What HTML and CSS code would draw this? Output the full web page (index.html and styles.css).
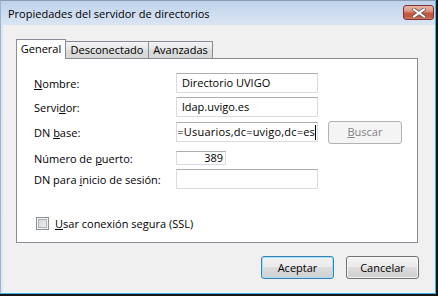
FILE: index.html
```html
<!DOCTYPE html>
<html>
<head>
<meta charset="utf-8">
<link rel="stylesheet" href="styles.css">
</head>
<body>
<div class="window">
  <div class="frame">
    <div class="titlebar">
      <span class="title">Propiedades del servidor de directorios</span>
      <div class="close">
        <svg width="14" height="10" viewBox="0 0 14 10">
          <path d="M2 1.5 L12 8.5 M12 1.5 L2 8.5" stroke="#5a5a5a" stroke-width="3.6" stroke-linecap="square"/>
          <path d="M2 1.5 L12 8.5 M12 1.5 L2 8.5" stroke="#ffffff" stroke-width="2" stroke-linecap="square"/>
        </svg>
      </div>
    </div>
    <div class="client">
      <div class="tabs">
        <div class="tab selected">General</div>
        <div class="tab t2">Desconectado</div>
        <div class="tab t3">Avanzadas</div>
      </div>
      <div class="panel">
        <div class="row r1">
          <span class="label"><u>N</u>ombre:</span>
          <div class="textbox">Directorio UVIGO</div>
        </div>
        <div class="row r2">
          <span class="label">Servi<u>d</u>or:</span>
          <div class="textbox">ldap.uvigo.es</div>
        </div>
        <div class="row r3">
          <span class="label">DN <u>b</u>ase:</span>
          <div class="textbox scrolled"><span class="dn">ou=Usuarios,dc=uvigo,dc=es</span><span class="caret"></span></div>
          <div class="btn disabled"><span><u>B</u>uscar</span></div>
        </div>
        <div class="row r4">
          <span class="label">Número de <u>p</u>uerto:</span>
          <div class="textbox port">389</div>
        </div>
        <div class="row r5">
          <span class="label">DN para <u>i</u>nicio de sesión:</span>
          <div class="textbox"></div>
        </div>
        <div class="check-row">
          <span class="checkbox"></span>
          <span class="check-label"><u>U</u>sar conexión segura (SSL)</span>
        </div>
      </div>
      <div class="buttons">
        <div class="btn default">Aceptar</div>
        <div class="btn">Cancelar</div>
      </div>
    </div>
  </div>
</div>
</body>
</html>
```
FILE: styles.css
```css
html, body {
  margin: 0;
  padding: 0;
  background: #1a1a1a;
}

body {
  font-family: "Open Sans", "Noto Sans", sans-serif;
  font-size: 11px;
  color: #000;
}

.window {
  width: 438px;
  height: 296px;
  background: #161616;
}

.frame {
  width: 436px;
  height: 294px;
  box-sizing: border-box;
  border-left: 1px solid #9fb3cc;
  border-top: 1px solid #8b9bb0;
  border-right: 1px solid #3db5ea;
  border-bottom: 1px solid #3db5ea;
  background: linear-gradient(#bfd2eb 0px, #cddcef 12px, #dae5f3 24px, #dfe9f5 100%);
  padding-left: 2px;
  display: flex;
  flex-direction: column;
}

.titlebar {
  height: 24px;
  display: flex;
  align-items: flex-start;
  padding-left: 5px;
  flex-shrink: 0;
}

.title {
  margin-top: 5px;
  line-height: 16px;
  font-size: 11px;
}

.close {
  margin-left: auto;
  margin-top: 4px;
  margin-right: 1px;
  width: 31px;
  height: 15px;
  box-sizing: border-box;
  border: 1px solid #7a3232;
  border-radius: 3px;
  background: linear-gradient(#ecb4a6 0%, #dd9482 40%, #c9573f 55%, #c4563f 80%, #d47a64 100%);
  display: flex;
  align-items: center;
  justify-content: center;
}

.close svg {
  display: block;
}

.client {
  flex: 1;
  background: #f0f0f0;
  padding: 14px 17px 0 13px;
  display: flex;
  flex-direction: column;
}

.tabs {
  display: flex;
  align-items: flex-end;
  height: 19px;
}

.tab {
  box-sizing: border-box;
  height: 17px;
  border: 1px solid #898c95;
  border-bottom: none;
  background: linear-gradient(#f4f4f4, #e4e4e4 50%, #dadada 51%, #d8d8d8);
  line-height: 15px;
  text-align: center;
  font-size: 11px;
}

.tab.selected {
  height: 20px;
  width: 50px;
  background: #ffffff;
  margin-bottom: -1px;
  position: relative;
  z-index: 1;
  line-height: 18px;
}

.tab.t2 {
  width: 83px;
  border-left: none;
}

.tab.t3 {
  width: 64px;
  border-left: none;
}

.panel {
  width: 402px;
  height: 185px;
  box-sizing: border-box;
  border: 1px solid #898c95;
  background: #ffffff;
  padding: 14px 0 0 17px;
}

.row {
  display: flex;
  align-items: center;
  height: 20px;
}

.r1 { margin-bottom: 4px; }
.r2 { margin-bottom: 5px; }
.r3 { margin-bottom: 9px; }
.r4 { height: 14px; margin-bottom: 4px; }

.label {
  width: 142px;
  flex-shrink: 0;
  white-space: nowrap;
}

.textbox {
  width: 142px;
  height: 20px;
  box-sizing: border-box;
  border: 1px solid #d9dbe1;
  border-top-color: #abadb3;
  background: #fff;
  padding: 0 5px;
  line-height: 18px;
  white-space: nowrap;
  overflow: hidden;
}

.textbox.scrolled {
  display: flex;
  justify-content: flex-end;
  align-items: center;
  padding: 0 1px 0 0;
}

.dn {
  flex-shrink: 0;
  letter-spacing: 0.2px;
}

.caret {
  flex-shrink: 0;
  width: 1px;
  height: 15px;
  background: #000;
}

.textbox.port {
  width: 50px;
  height: 14px;
  line-height: 12px;
  text-align: right;
  padding: 0 2px 0 0;
  overflow: visible;
}

.btn {
  box-sizing: border-box;
  width: 73px;
  height: 23px;
  border: 1px solid #707070;
  border-radius: 3px;
  background: linear-gradient(#f2f2f2 0%, #ebebeb 49%, #dddddd 50%, #cfcfcf 100%);
  box-shadow: inset 0 0 0 1px rgba(255, 255, 255, 0.75);
  display: flex;
  align-items: center;
  justify-content: center;
  line-height: 16px;
}

.btn.disabled {
  margin-left: 10px;
  width: 74px;
  border-color: #adb2b5;
  background: #f4f4f4;
  box-shadow: none;
  color: #838383;
}

.btn.default {
  border-color: #3c7fb1;
  box-shadow: inset 0 0 0 1px #9ee3fb;
}

.check-row {
  margin-top: 28px;
  display: flex;
  align-items: center;
  padding-left: 2px;
  height: 13px;
}

.checkbox {
  width: 13px;
  height: 13px;
  box-sizing: border-box;
  border: 1px solid #8e8f8f;
  background: linear-gradient(135deg, #cbcfd5, #f6f6f6);
  box-shadow: inset 0 0 0 1px #f4f4f4, inset 0 0 0 2px #aeb3b9;
  margin-right: 6px;
  flex-shrink: 0;
}

.buttons {
  display: flex;
  justify-content: flex-end;
  gap: 12px;
  margin-top: 13px;
  margin-right: -1px;
}
```
